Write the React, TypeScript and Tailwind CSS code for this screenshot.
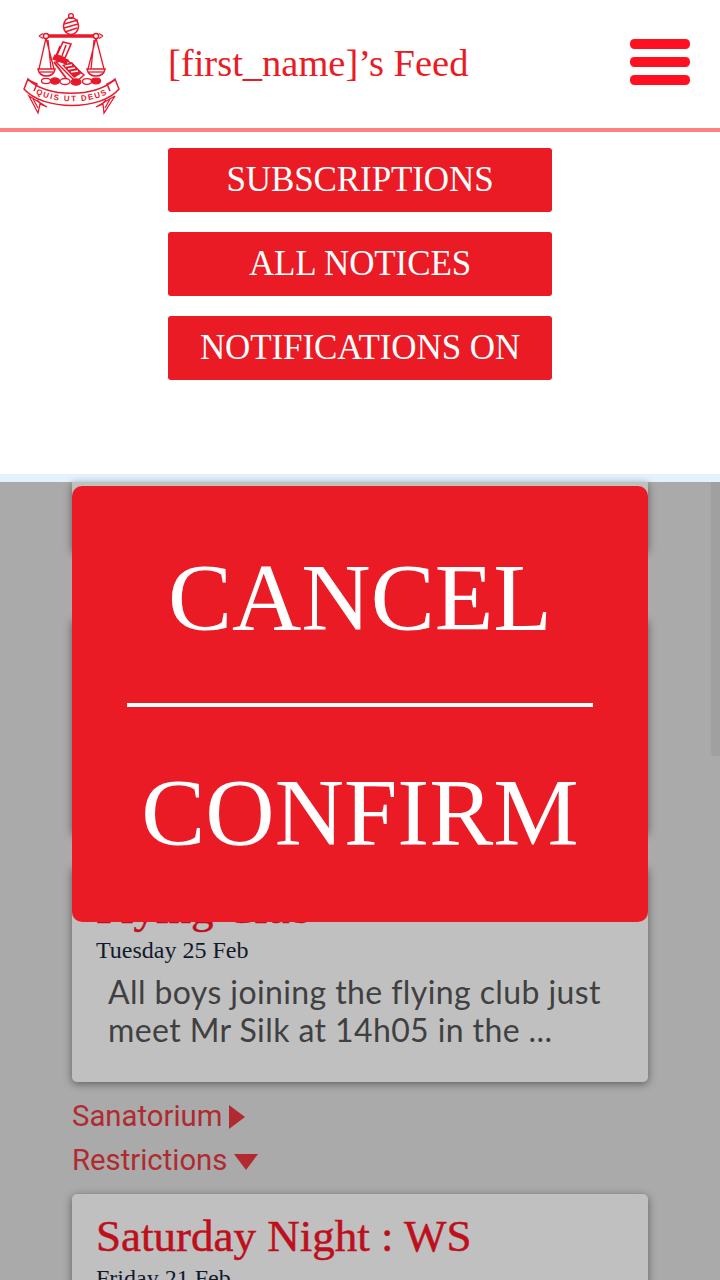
const serif = "font-['Liberation_Serif',serif]";

function Logo() {
  return (
    <svg width="120" height="128" viewBox="0 0 120 128" fill="none" stroke="#e8192c" strokeWidth="1.3" className="shrink-0">
      {/* pommel */}
      <circle cx="71" cy="16" r="2.4" strokeWidth="1.4" />
      <ellipse cx="71" cy="26" rx="7.5" ry="8.500" strokeWidth="1.6" />
      <path d="M64 24 L78 20 M64 28 L78 24 M65 32 L77 28" strokeWidth="1.5" />
      {/* beam */}
      <path d="M45 36 H97" strokeWidth="3.500" />
      <circle cx="46" cy="36" r="2.600" strokeWidth="1.5" fill="#fff" />
      <circle cx="96" cy="36" r="2.600" strokeWidth="1.5" fill="#fff" />
      <path d="M39 36 L43 33.500 M39 36 L43 38.500 M103 36 L99 33.500 M103 36 L99 38.500" />
      {/* scale strings */}
      <path d="M46 38 L39 69 M46 38 L54 69 M48 40 L51 69 M96 38 L88 69 M96 38 L104 69 M94 40 L91 69" />
      {/* pans */}
      <path d="M38 69 H55 C54 74 50 76 46.500 76 C43 76 39 74 38 69 Z" fill="#fff" strokeWidth="1.5" />
      <path d="M40 72 H53" />
      <path d="M87 69 H105 C104 74 100 76 96 76 C92 76 88 74 87 69 Z" fill="#fff" strokeWidth="1.5" />
      <path d="M89 72 H103" />
      {/* sword handle and guard */}
      <path d="M63 42 L71 44 L65 58 L57 55 Z" strokeWidth="1.600" />
      <path d="M60 46 L56 56 M66 45 L62 56" strokeWidth="1.500" />
      <path d="M55 55 L68 60 L66 64 L53 59 Z" fill="#e8192c" />
      {/* book / blade */}
      <path d="M56 62 L67 60 L84 75 L76 82 Z" strokeWidth="1.500" />
      <path d="M62 65 L72 62 L82 73 L74 78 Z" fill="#e8192c" stroke="none" />
      <path d="M65 66 L72 65 M68 69 L75 68 M71 72 L78 71" stroke="#fff" />
      <path d="M54 62 L66 78" strokeWidth="1.800" />
      {/* beads */}
      <ellipse cx="46" cy="81" rx="4.500" ry="2.600" />
      <ellipse cx="55" cy="81" rx="4.500" ry="3" fill="#e8192c" />
      <ellipse cx="65" cy="81.500" rx="5" ry="3" />
      <ellipse cx="76" cy="82" rx="5" ry="3.200" fill="#e8192c" />
      <ellipse cx="87" cy="81.500" rx="4.500" ry="2.800" />
      <ellipse cx="96" cy="81" rx="4.500" ry="2.800" fill="#e8192c" />
      {/* ribbon */}
      <path d="M28 79 C45 98 97 98 115 79 L119 89 C101 111 43 111 24 89 Z" fill="#fff" strokeWidth="1.500" />
      <path d="M28 80 L37 84 L34 91 M115 80 L107 84 L110 91" strokeWidth="1.500" />
      <path d="M29 96 L38 113 L40 104 L47 107 Z M115 96 L104 113 L103 104 L96 107 Z" fill="#fff" strokeWidth="1.300" />
      <path d="M33 99 L38 108 M37 100 L40 103 M110 99 L105 108 M106 100 L103 103" />
      <path id="ribbon-arc" d="M35 93 C52 104 92 104 109 93" stroke="none" />
      <text fill="#e8192c" stroke="none" fontSize="8" fontWeight="700" letterSpacing="1.500" fontFamily="'Liberation Sans', sans-serif">
        <textPath href="#ribbon-arc" startOffset="50%" textAnchor="middle">QUIS UT DEUS</textPath>
      </text>
    </svg>
  );
}

function MenuIcon() {
  return (
    <svg width="62" height="48" viewBox="0 0 62 48" fill="#ff1020" className="shrink-0">
      <rect x="1" y="1" width="60" height="10" rx="4.500" />
      <rect x="1" y="19" width="60" height="10" rx="4.500" />
      <rect x="1" y="37" width="60" height="10" rx="4.500" />
    </svg>
  );
}

function MenuButton({ label }: { label: string }) {
  return (
    <button className={`flex h-16 w-[384px] items-center justify-center rounded-[3px] bg-[#ea1b25] text-[35px] tracking-[-0.1px] text-white ${serif}`}>
      {label}
    </button>
  );
}

function NoticeCard({ title, date, body }: { title: string; date: string; body?: string[] }) {
  return (
    <div className="flex h-[216px] w-[576px] flex-col rounded-[5px] bg-[#c0c0c0] pl-6 shadow-[0_2px_8px_rgba(0,0,0,0.45)]">
      <h3 className={`mt-[17px] h-[50px] whitespace-nowrap text-[45px] leading-[50px] text-[#bd0f1c] [-webkit-text-stroke:0.5px_#bd0f1c] ${serif}`}>{title}</h3>
      <p className={`mt-[4px] h-[26px] text-[24px] leading-[26px] text-[#111a2c] ${serif}`}>{date}</p>
      {body && (
        <div className="mt-[10px] pl-3 font-['Lato',sans-serif] text-[32px] leading-[38px] tracking-[0.4px] text-[#404040]">
          {body.map((line) => (
            <p key={line} className="whitespace-nowrap">{line}</p>
          ))}
        </div>
      )}
    </div>
  );
}

function SectionLabel({ label, open }: { label: string; open?: boolean }) {
  return (
    <div className="flex h-11 items-center gap-[7px] font-['Roboto',sans-serif] text-[29.300px] text-[#b02a30]">
      <span>{label}</span>
      {open ? (
        <svg width="24" height="16" viewBox="0 0 24 16" fill="#b02a30" className="mt-[2px]"><path d="M0 0H24L12 16Z" /></svg>
      ) : (
        <svg width="16" height="24" viewBox="0 0 16 24" fill="#b02a30"><path d="M0 0L16 12L0 24Z" /></svg>
      )}
    </div>
  );
}

export default function App() {
  return (
    <div className="relative h-[1280px] w-[720px] overflow-hidden bg-[#aaaaaa]">
      <header className="flex h-[132px] items-center border-b-4 border-[#ff8080] bg-white">
        <Logo />
        <h1 className={`ml-[48px] flex-1 text-[38.500px] text-[#ea1b25] ${serif}`}>[first_name]’s Feed</h1>
        <div className="mb-[4px] mr-[29px]">
          <MenuIcon />
        </div>
      </header>

      <nav className="flex h-[342px] flex-col items-center gap-5 bg-white pt-4">
        <MenuButton label="SUBSCRIPTIONS" />
        <MenuButton label="ALL NOTICES" />
        <MenuButton label="NOTIFICATIONS ON" />
      </nav>
      <div className="h-2 bg-[#e3f2fd]" />

      {/* feed behind the dialog */}
      <main className="relative flex flex-col px-[72px]">
        <div className="h-[70px] w-[576px] rounded-b-[5px] bg-[#c0c0c0] shadow-[0_2px_8px_rgba(0,0,0,0.45)]" />
        <div className="mt-[66px] h-[216px] w-[576px] rounded-[5px] bg-[#c0c0c0] shadow-[0_2px_8px_rgba(0,0,0,0.45)]" />
        <div className="mt-[32px]">
          <NoticeCard
            title="Flying Club"
            date="Tuesday 25 Feb"
            body={["All boys joining the flying club just", "meet Mr Silk at 14h05 in the ..."]}
          />
        </div>
        <div className="mt-[13px]">
          <SectionLabel label="Sanatorium" />
          <SectionLabel label="Restrictions" open />
        </div>
        <div className="mt-[11px]">
          <NoticeCard title="Saturday Night : WS" date="Friday 21 Feb" />
        </div>
      </main>

      {/* scrollbar */}
      <div className="absolute right-0 top-[482px] h-[274px] w-[9px] rounded-bl-[4px] bg-[#a0a0a0]" />

      {/* confirm dialog */}
      <div className={`absolute left-[72px] top-[486px] flex h-[436px] w-[576px] flex-col items-center rounded-[10px] bg-[#ea1b25] text-[96px] text-white ${serif}`}>
        <button className="flex h-[217px] items-center pt-[6px]">CANCEL</button>
        <div className="h-[4px] w-[466px] bg-white" />
        <button className="flex h-[215px] items-center pb-[4px]">CONFIRM</button>
      </div>
    </div>
  );
}
